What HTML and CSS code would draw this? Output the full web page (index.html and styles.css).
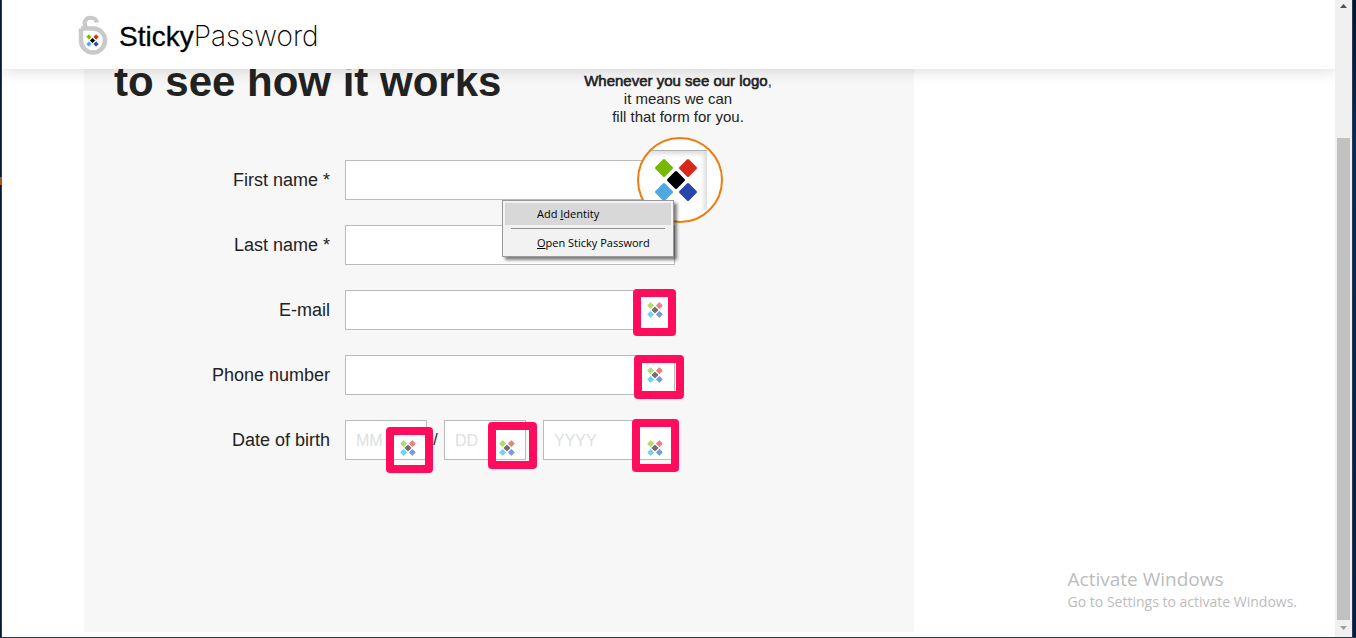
FILE: index.html
```html
<!DOCTYPE html>
<html lang="en">
<head>
    <meta charset="UTF-8">
    <title>Sticky Password</title>
    <link rel="stylesheet" href="styles.css">
</head>
<body>
<svg width="0" height="0" class="defs">
    <symbol id="mark" viewBox="0 0 44 44">
        <g stroke-width="3" stroke-linejoin="round">
            <path class="green" d="M10 2.500L17.500 10 10 17.500 2.500 10z"/>
            <path class="red" d="M34 2.500L41.500 10 34 17.500 26.500 10z"/>
            <path class="black" d="M22 14.500L29.500 22 22 29.500 14.500 22z"/>
            <path class="sky" d="M10 26.500L17.500 34 10 41.500 2.500 34z"/>
            <path class="blue" d="M34 26.500L41.500 34 34 41.500 26.500 34z"/>
        </g>
    </symbol>
</svg>
<div class="window">
    <div class="edge edge_left"><span class="edge_mark"></span></div>
    <div class="page">
        <header>
            <a href="#" class="logo">
                <svg class="lock" viewBox="0 0 30 40">
                    <path d="M3 13.500V25.500A12 12 0 1 0 15 13.500H3" fill="#fff" stroke="#c8c9c8" stroke-width="4.500"/>
                    <path d="M8.500 13C4.500 8 7.500 2.700 12.500 2.700C16 2.700 18.300 4.500 19.200 7.500" fill="none" stroke="#c8c9c8" stroke-width="4"/>
                    <use href="#mark" x="8" y="19" width="13" height="13"/>
                </svg>
                <span class="name">Sticky<span class="thin">Password</span></span>
            </a>
        </header>
        <main>
            <section class="panel">
                <div class="intro">
                    <h1>to see how it works</h1>
                    <p class="note"><b>Whenever you see our logo</b>,<br>it means we can<br>fill that form for you.</p>
                </div>
                <form>
                    <div class="row">
                        <label for="first">First name *</label>
                        <div class="field">
                            <input type="text" id="first">
                            <div class="lens"><div class="lens_box"><svg><use href="#mark"/></svg></div></div>
                            <div class="menu">
                                <button type="button" class="active">Add <u>I</u>dentity</button>
                                <hr>
                                <button type="button"><u>O</u>pen Sticky Password</button>
                            </div>
                        </div>
                    </div>
                    <div class="row">
                        <label for="last">Last name *</label>
                        <div class="field"><input type="text" id="last"></div>
                    </div>
                    <div class="row">
                        <label for="email">E-mail</label>
                        <div class="field">
                            <input type="text" id="email">
                            <svg class="icon"><use href="#mark"/></svg>
                            <span class="frame frame_email"></span>
                        </div>
                    </div>
                    <div class="row">
                        <label for="phone">Phone number</label>
                        <div class="field">
                            <input type="text" id="phone">
                            <svg class="icon"><use href="#mark"/></svg>
                            <span class="frame frame_phone"></span>
                        </div>
                    </div>
                    <div class="row">
                        <label for="month">Date of birth</label>
                        <div class="date">
                            <div class="field">
                                <input type="text" id="month" placeholder="MM">
                                <svg class="icon"><use href="#mark"/></svg>
                                <span class="frame frame_month"></span>
                            </div>
                            <span class="slash">/</span>
                            <div class="field">
                                <input type="text" aria-label="Day" placeholder="DD">
                                <svg class="icon"><use href="#mark"/></svg>
                                <span class="frame frame_day"></span>
                            </div>
                            <span class="slash">/</span>
                            <div class="field year">
                                <input type="text" aria-label="Year" placeholder="YYYY">
                                <svg class="icon"><use href="#mark"/></svg>
                                <span class="frame frame_year"></span>
                            </div>
                        </div>
                    </div>
                </form>
            </section>
        </main>
        <div class="watermark">
            <p class="big">Activate Windows</p>
            <p>Go to Settings to activate Windows.</p>
        </div>
    </div>
    <div class="scroll">
        <svg class="arrow" viewBox="0 0 17 17"><path d="M5 8h7L8.500 4z" fill="#505050"/></svg>
        <div class="track"><div class="thumb"></div></div>
        <svg class="arrow" viewBox="0 0 17 17"><path d="M5 6h7L8.500 10z" fill="#a0a0a0"/></svg>
    </div>
    <div class="edge edge_right"></div>
</div>
</body>
</html>
```

FILE: styles.css
```css
*{
    margin:0;
    padding:0;
    box-sizing:border-box;
}
body{
    font-family:"Liberation Sans",Arial,sans-serif;
    color:#222;
    background:#fff;
    --green:#77b800;
    --red:#d72a18;
    --black:#000;
    --sky:#4fa8e0;
    --blue:#2a46ab;
}
.defs{
    position:absolute;
}
.window{
    display:grid;
    grid-template-columns:2px 1fr 17px 4px;
    height:100vh;
    border-bottom:1px solid #2b3646;
}
.edge{
    position:relative;
    background:#04183a;
}
.edge_left{
    border-right:1px solid #2b3a50;
}
.edge_right{
    border-left:1px solid #2b3a50;
    background:linear-gradient(#03142e,#032a5c 22%,#031c44);
}
.edge_mark{
    position:absolute;
    left:0;
    top:177px;
    width:2px;
    height:8px;
    background:#b0501c;
}
.page{
    position:relative;
    display:flex;
    flex-direction:column;
    overflow:hidden;
}
/* logo colours */
.green{
    fill:var(--green);
    stroke:var(--green);
}
.red{
    fill:var(--red);
    stroke:var(--red);
}
.black{
    fill:var(--black);
    stroke:var(--black);
}
.sky{
    fill:var(--sky);
    stroke:var(--sky);
}
.blue{
    fill:var(--blue);
    stroke:var(--blue);
}
/* header lies over the scrolled form */
header{
    position:absolute;
    top:0;
    left:0;
    right:0;
    z-index:5;
    height:69px;
    padding:15px 0 0 76px;
    background:#fff;
    box-shadow:0 2px 14px rgba(0,0,0,.14);
}
.logo{
    display:flex;
    gap:11px;
    width:max-content;
    color:#000;
    text-decoration:none;
}
.lock{
    width:30px;
    height:40px;
}
.name{
    font-size:28px;
    line-height:42px;
    -webkit-text-stroke:.3px #000;
}
.thin{
    font-family:Inter,"Liberation Sans",sans-serif;
    font-weight:200;
    -webkit-text-stroke:0;
}
main{
    flex:1;
    display:flex;
    padding:0 82px 5px;
}
.panel{
    width:830px;
    padding:58px 30px 0;
    background:#f7f7f7;
}
.intro{
    display:flex;
    justify-content:space-between;
    height:102px;
}
h1{
    font-size:42px;
    line-height:48px;
}
.note{
    width:276px;
    margin-right:68px;
    padding-top:14px;
    font-size:15px;
    line-height:18px;
    text-align:center;
}
.note b{
    font-weight:normal;
    -webkit-text-stroke:.6px #222;
}
form{
    display:flex;
    flex-direction:column;
    gap:25px;
}
.row{
    display:flex;
    gap:15px;
}
label{
    width:216px;
    font-size:18px;
    line-height:40px;
    text-align:right;
}
.field{
    position:relative;
    width:330px;
    height:40px;
}
input{
    display:block;
    width:100%;
    height:40px;
    padding:2px 10px 0;
    border:1px solid #bbb;
    background:#fff;
    font:16px "Liberation Sans",Arial,sans-serif;
}
input::placeholder{
    color:#dcdfe0;
}
.date{
    display:flex;
    width:330px;
}
.date .field{
    width:82px;
}
.date .year{
    width:132px;
}
.slash{
    width:17px;
    font-size:16px;
    line-height:40px;
    text-align:center;
}
/* pale logo inside the fields */
.icon{
    position:absolute;
    right:12px;
    top:12px;
    width:16px;
    height:16px;
    --green:#b3da70;
    --red:#ea8080;
    --black:#707070;
    --sky:#74d0f2;
    --blue:#789cd8;
}
.date .icon{
    right:11px;
    top:20px;
}
.date .year .icon{
    right:12px;
}
/* highlight frames round the field icons */
.frame{
    position:absolute;
    z-index:1;
    border:8px solid #ff0c5c;
    border-radius:4px;
}
.frame_email{
    left:288px;
    top:-1px;
    width:43px;
    height:47px;
}
.frame_phone{
    left:289px;
    top:0;
    width:50px;
    height:44px;
}
.frame_month{
    left:41px;
    top:7px;
    width:47px;
    height:46px;
}
.frame_day{
    left:44px;
    top:2px;
    width:49px;
    height:47px;
}
.frame_year{
    left:89px;
    top:-1px;
    width:47px;
    height:53px;
}
.lens{
    position:absolute;
    z-index:2;
    left:292px;
    top:-23px;
    width:86px;
    height:86px;
    border:2px solid #ef7d0c;
    border-radius:50%;
    background:#fff;
    overflow:hidden;
}
.lens_box{
    width:68px;
    height:60px;
    margin-top:11px;
    padding:7px 0 0 15px;
    border-top:1px solid #b0b0b0;
    box-shadow:inset -3px 3px 5px rgba(0,0,0,.14);
}
.lens svg{
    display:block;
    width:44px;
    height:44px;
}
.menu{
    position:absolute;
    z-index:3;
    left:157px;
    top:40px;
    width:172px;
    padding:2px;
    border:1px solid #999;
    background:#f2f2f2;
    box-shadow:3px 3px 3px rgba(0,0,0,.5);
}
.menu button{
    display:block;
    width:100%;
    height:22px;
    padding:0 0 2px 32px;
    border:0;
    background:none;
    color:#000;
    font:11px "Open Sans","Noto Sans",sans-serif;
    text-align:left;
    white-space:nowrap;
}
.menu .active{
    background:#d8d8d8;
}
.menu hr{
    margin:3px 6px;
    border:0;
    border-top:1px solid #909090;
}
.watermark{
    position:absolute;
    right:38px;
    bottom:25px;
    color:#bcbcbc;
    font:14px/20px "Open Sans","Noto Sans",sans-serif;
}
.watermark .big{
    font-size:19px;
    line-height:26px;
}
.scroll{
    display:flex;
    flex-direction:column;
    background:#f0f0f0;
}
.arrow{
    flex:none;
    width:17px;
    height:17px;
}
.track{
    flex:1;
    display:flex;
    align-items:flex-end;
    padding:0 2px;
}
.thumb{
    width:100%;
    height:80%;
    background:#c1c1c1;
}
```
